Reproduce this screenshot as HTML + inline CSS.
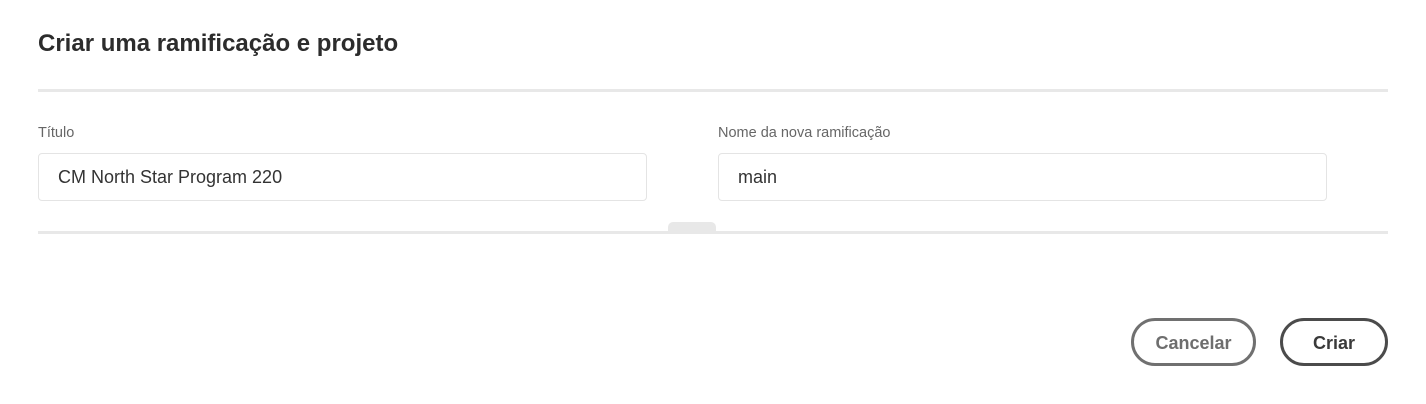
<!DOCTYPE html>
<html><head><style>
body{margin:0;width:1426px;height:404px;background:#fff;font-family:"Liberation Sans",sans-serif;position:relative;overflow:hidden}
.a{position:absolute}
h1{position:absolute;left:38px;top:30px;margin:0;font-size:24px;font-weight:bold;color:#2c2c2c}
.hr{position:absolute;left:38px;width:1350px;height:3px;background:#e8e8e8}
.lbl{position:absolute;top:125px;font-size:14.5px;color:#666}
.inp{position:absolute;top:153px;height:48px;border:1px solid #e4e4e4;border-radius:4px;box-sizing:border-box;font-size:18px;color:#333;padding-left:19px;line-height:46px}
.btn{position:absolute;top:318px;height:48px;border-radius:25px;box-sizing:border-box;font-size:18px;font-weight:bold;text-align:center;line-height:44px;background:#fff}
</style></head><body>
<h1>Criar uma ramificação e projeto</h1>
<div class="hr" style="top:89px"></div>
<div class="lbl" style="left:38px">Título</div>
<div class="lbl" style="left:718px">Nome da nova ramificação</div>
<div class="inp" style="left:38px;width:609px">CM North Star Program 220</div>
<div class="inp" style="left:718px;width:609px">main</div>
<div class="hr" style="top:231px"></div>
<div class="a" style="left:668px;top:222px;width:48px;height:11px;background:#e8e8e8;border-radius:5px 5px 0 0"></div>
<div class="btn" style="left:1131px;width:125px;border:3px solid #707070;color:#6e6e6e">Cancelar</div>
<div class="btn" style="left:1280px;width:108px;border:3px solid #4b4b4b;color:#3a3a3a">Criar</div>
</body></html>
